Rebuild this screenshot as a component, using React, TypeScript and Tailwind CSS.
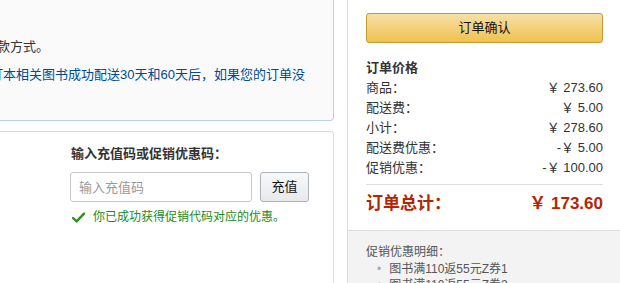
const font = "font-['Liberation_Sans','Noto_Sans_CJK_SC',sans-serif]";

function CheckIcon() {
  return (
    <svg width="13" height="11" viewBox="0 0 13 11" className="shrink-0">
      <path d="M1 6 L4.6 9.4 L12 1.6" fill="none" stroke="#2f8f1f" strokeWidth="2.4" strokeLinecap="round" strokeLinejoin="round" />
    </svg>
  );
}

const priceRows = [
  { label: '商品：', value: '￥ 273.60' },
  { label: '配送费：', value: '￥ 5.00' },
  { label: '小计：', value: '￥ 278.60' },
  { label: '配送费优惠：', value: '-￥ 5.00' },
  { label: '促销优惠：', value: '-￥ 100.00' },
];

export default function App() {
  return (
    <div className={`${font} flex h-[283px] w-[620px] overflow-hidden bg-white text-[13px] text-[#333]`}>
      {/* left column: payment note + promo code */}
      <div className="flex w-[334px] shrink-0 flex-col">
        <div className="-mt-[10px] h-[131px] overflow-hidden whitespace-nowrap rounded-br-[4px] border-r border-b border-[#b4d3e3] bg-[#fafafa] pt-[47px]">
          <p className="-ml-[16px] leading-[20px]">付款方式。</p>
          <p className="-ml-[10px] mt-[8px] leading-[20px] text-[#004b91]">订本相关图书成功配送30天和60天后，如果您的订单没</p>
        </div>

        <div className="mt-[10px] flex-1 rounded-tr-[4px] border-t border-r border-[#dcdcdc] pt-[12px] pl-[70px]">
          <h3 className="pl-px text-[13px] font-bold leading-[20px]">输入充值码或促销优惠码：</h3>
          <div className="mt-[8px] flex gap-[8px]">
            <input
              placeholder="输入充值码"
              className="h-[30px] w-[182px] rounded-[3px] border border-[#c9c9c9] px-[8px] text-[13px] placeholder:text-[#999] focus:outline-none"
            />
            <button className="h-[30px] w-[49px] rounded-[3px] border border-[#adb1b8] bg-gradient-to-b from-[#f7f8fa] to-[#e7e9ec] text-[13px] text-[#111]">
              充值
            </button>
          </div>
          <div className="mt-[6px] flex items-center gap-[8px] pl-[2px] text-[12px] leading-[18px] text-[#1c8a1c]">
            <CheckIcon />
            <span>你已成功获得促销代码对应的优惠。</span>
          </div>
        </div>
      </div>

      {/* right column: order summary */}
      <div className="ml-[13px] flex flex-1 flex-col border-l border-[#dedede]">
        <div className="pt-[13px] pr-[17px] pl-[18px]">
          <button className="h-[30px] w-full rounded-[3px] border border-[#c49b33] bg-gradient-to-b from-[#f7dfa5] to-[#f0c14b] text-[13px] text-[#111]">
            订单确认
          </button>

          <h4 className="mt-[15px] text-[13px] font-bold leading-[20px]">订单价格</h4>
          {priceRows.map((row) => (
            <div key={row.label} className="flex justify-between leading-[20px]">
              <span>{row.label}</span>
              <span>{row.value}</span>
            </div>
          ))}

          <div className="mt-[6px] border-t border-[#dddddd]" />
          <div className="mt-[7px] flex justify-between text-[17px] font-bold leading-[24px] text-[#b12704]">
            <span>订单总计：</span>
            <span>￥ 173.60</span>
          </div>
        </div>

        <div className="mt-[14px] flex-1 border-t border-[#dddddd] bg-[#f3f3f3] pt-[13px] pl-[18px] text-[12px] leading-[16px] text-[#555]">
          <p>促销优惠明细：</p>
          <ul className="mt-px pl-[11px]">
            <li className="flex gap-[8px]">
              <span className="text-[#aaa]">•</span>
              <span>图书满110返55元Z券1</span>
            </li>
            <li className="flex gap-[8px]">
              <span className="text-[#aaa]">•</span>
              <span>图书满110返55元Z券2</span>
            </li>
          </ul>
        </div>
      </div>
    </div>
  );
}
